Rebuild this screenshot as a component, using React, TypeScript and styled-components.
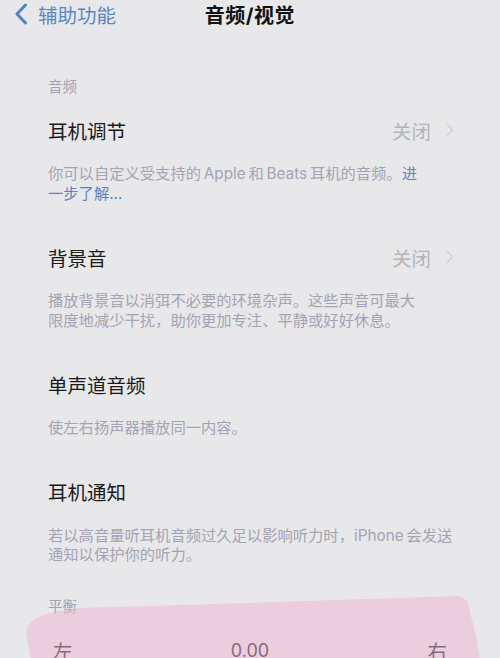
import styled, { createGlobalStyle } from 'styled-components';

const GlobalStyle = createGlobalStyle`
  html, body {
    margin: 0;
    padding: 0;
    background: #e8e8ea;
  }
  body {
    font-family: "Inter", "Noto Sans CJK SC", sans-serif;
    -webkit-font-smoothing: antialiased;
  }
`;

const Screen = styled.div`
  position: relative;
  width: 500px;
  height: 658px;
  overflow: hidden;
  background: #e8e8ea;
  color: #1c1c1e;
`;

const NavBar = styled.div`
  position: relative;
  height: 28px;
  display: flex;
  align-items: center;
  justify-content: center;
`;

const BackButton = styled.div`
  position: absolute;
  left: 14px;
  top: 0;
  height: 28px;
  display: flex;
  align-items: center;
  gap: 10px;
  color: #5886c5;
  font-size: 19.5px;
`;

const NavTitle = styled.div`
  font-size: 20px;
  font-weight: 700;
  color: #111;
  letter-spacing: 0.5px;
`;

const Content = styled.div`
  padding: 49px 48px 0 48px;
  display: flex;
  flex-direction: column;
`;

const SectionHeader = styled.div<{ $gap?: number }>`
  font-size: 14.5px;
  line-height: 20px;
  color: #a3a2b0;
  margin-bottom: ${p => p.$gap ?? 11}px;
`;

const Group = styled.div`
  display: flex;
  flex-direction: column;
  margin-bottom: 32px;
`;

const Row = styled.div`
  height: 44px;
  display: flex;
  align-items: center;
  justify-content: space-between;
`;

const RowTitle = styled.div`
  font-size: 19.5px;
  color: #1a1a1c;
`;

const RowValue = styled.div`
  display: flex;
  align-items: center;
  gap: 15px;
  font-size: 19.5px;
  color: #b4b4ba;
  margin-right: -2px;
`;

const Description = styled.div`
  margin-top: 12px;
  font-size: 15.3px;
  line-height: 19.5px;
  color: #a4a3b3;
  white-space: nowrap;

  a {
    color: #5a86c0;
    text-decoration: none;
  }
`;

const SliderLabels = styled.div`
  height: 44px;
  display: flex;
  align-items: center;
  justify-content: space-between;
  padding: 0 5px;
  font-size: 19.5px;
  color: #1a1a1c;
  transform: translateY(2px);
`;

const SliderValue = styled.span`
  font-size: 18px;
  color: #1a1a1c;
`;

const Highlight = styled.svg`
  position: absolute;
  left: 0;
  top: 0;
  width: 500px;
  height: 658px;
  pointer-events: none;
`;

const Chevron = () => (
  <svg width="8" height="14" viewBox="0 0 8 14">
    <path d="M1.5 1.5 L6.5 7 L1.5 12.5" fill="none" stroke="#d2d2d6" strokeWidth="1.6" strokeLinecap="round" strokeLinejoin="round" />
  </svg>
);

const BackChevron = () => (
  <svg width="14" height="22" viewBox="0 0 14 22">
    <path d="M11.5 2 L3 11 L11.5 20" fill="none" stroke="#4f83c8" strokeWidth="3" strokeLinecap="round" strokeLinejoin="round" />
  </svg>
);

export default function App() {
  return (
    <Screen>
      <GlobalStyle />
      <NavBar>
        <BackButton>
          <BackChevron />
          <span>辅助功能</span>
        </BackButton>
        <NavTitle>音频/视觉</NavTitle>
      </NavBar>

      <Content>
        <SectionHeader>音频</SectionHeader>

        <Group>
          <Row>
            <RowTitle>耳机调节</RowTitle>
            <RowValue>关闭<Chevron /></RowValue>
          </Row>
          <Description>
            你可以自定义受支持的&thinsp;Apple&thinsp;和&thinsp;Beats&thinsp;耳机的音频。<a>进<br />一步了解...</a>
          </Description>
        </Group>

        <Group>
          <Row>
            <RowTitle>背景音</RowTitle>
            <RowValue>关闭<Chevron /></RowValue>
          </Row>
          <Description>
            播放背景音以消弭不必要的环境杂声。这些声音可最大<br />
            限度地减少干扰，助你更加专注、平静或好好休息。
          </Description>
        </Group>

        <Group>
          <Row>
            <RowTitle>单声道音频</RowTitle>
          </Row>
          <Description>使左右扬声器播放同一内容。</Description>
        </Group>

        <Group>
          <Row>
            <RowTitle>耳机通知</RowTitle>
          </Row>
          <Description>
            若以高音量听耳机音频过久足以影响听力时，iPhone&thinsp;会发送<br />
            通知以保护你的听力。
          </Description>
        </Group>

        <SectionHeader $gap={10}>平衡</SectionHeader>
        <SliderLabels>
          <span>左</span>
          <SliderValue>0.00</SliderValue>
          <span>右</span>
        </SliderLabels>
      </Content>

      <Highlight viewBox="0 0 500 658">
        <path
          d="M31 660 L26 632 Q28 613 80 608 L250 603 L458 596 Q465 597 468 604 L477 640 L480 660 Z"
          fill="rgba(238, 178, 210, 0.5)"
        />
      </Highlight>
    </Screen>
  );
}
